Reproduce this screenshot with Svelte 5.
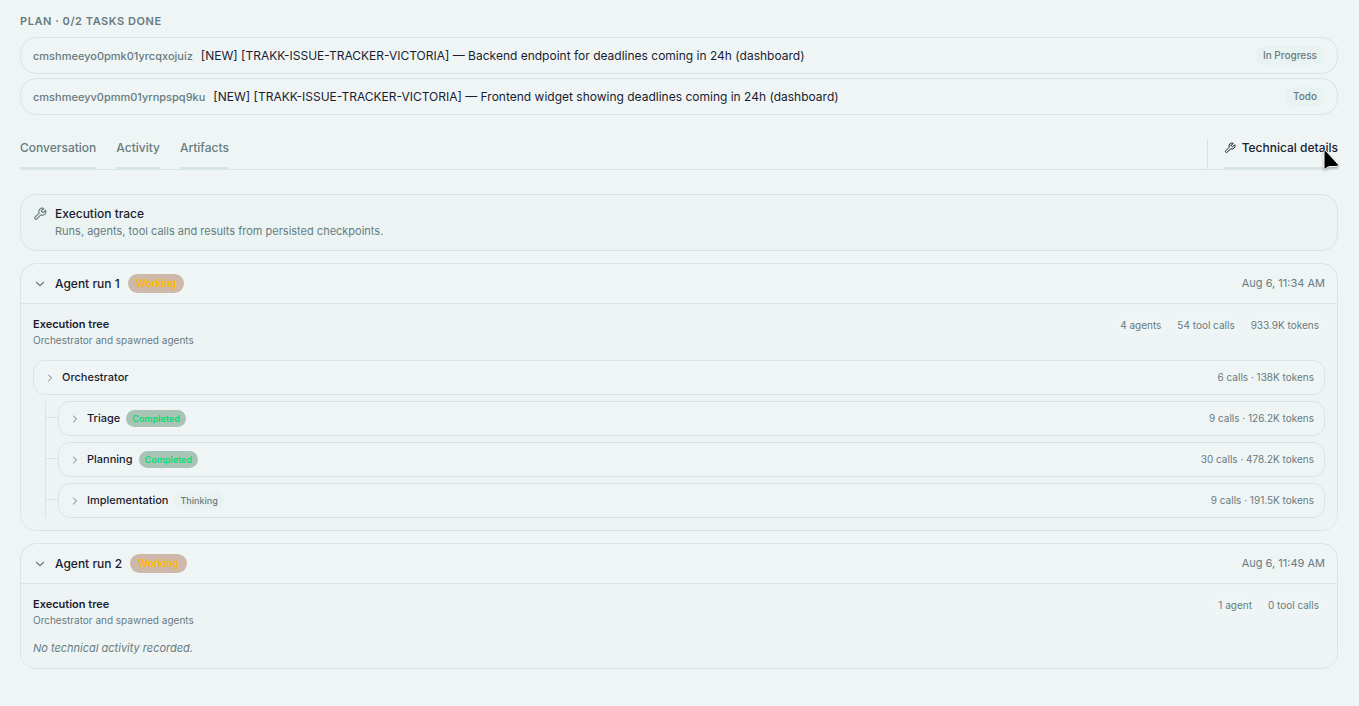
<script lang="ts">
	const tasks = [
		{
			id: "cmshmeeyo0pmk01yrcqxojuiz",
			title: "[NEW] [TRAKK-ISSUE-TRACKER-VICTORIA] — Backend endpoint for deadlines coming in 24h (dashboard)",
			status: "In Progress"
		},
		{
			id: "cmshmeeyv0pmm01yrnpspq9ku",
			title: "[NEW] [TRAKK-ISSUE-TRACKER-VICTORIA] — Frontend widget showing deadlines coming in 24h (dashboard)",
			status: "Todo"
		}
	];

	const tabs = ["Conversation", "Activity", "Artifacts"];
	let activeTab = $state("Technical details");

	let runs = $state([
		{
			name: "Agent run 1",
			status: "Working",
			time: "Aug 6, 11:34 AM",
			open: true,
			stats: ["4 agents", "54 tool calls", "933.9K tokens"],
			root: { name: "Orchestrator", usage: "6 calls · 138K tokens" },
			children: [
				{ name: "Triage", status: "Completed", usage: "9 calls · 126.2K tokens" },
				{ name: "Planning", status: "Completed", usage: "30 calls · 478.2K tokens" },
				{ name: "Implementation", status: "Thinking", usage: "9 calls · 191.5K tokens" }
			]
		},
		{
			name: "Agent run 2",
			status: "Working",
			time: "Aug 6, 11:49 AM",
			open: true,
			stats: ["1 agent", "0 tool calls"],
			root: null,
			children: []
		}
	]);
</script>

{#snippet wrench(size)}
	<svg class="icon" width={size} height={size} viewBox="0 0 24 24" aria-hidden="true">
		<path d="M14.7 6.3a1 1 0 0 0 0 1.4l1.6 1.6a1 1 0 0 0 1.4 0l3.77-3.77a6 6 0 0 1-7.94 7.94l-6.91 6.91a2.12 2.12 0 0 1-3-3l6.91-6.91a6 6 0 0 1 7.94-7.94l-3.76 3.76z" />
	</svg>
{/snippet}

{#snippet chevron(size, open)}
	<svg class="icon chevron" width={size} height={size} viewBox="0 0 24 24" aria-hidden="true">
		<path d={open ? "m6 9 6 6 6-6" : "m9 18 6-6-6-6"} />
	</svg>
{/snippet}

{#snippet node(item)}
	<button class="node">
		{@render chevron(12, false)}
		<span class="node-name">{item.name}</span>
		{#if item.status}
			<span class="badge small {item.status.toLowerCase()}">{item.status}</span>
		{/if}
		<span class="usage">{item.usage}</span>
	</button>
{/snippet}

<main>
	<section>
		<h2 class="plan-title">Plan · 0/2 tasks done</h2>
		<ul class="tasks">
			{#each tasks as task}
				<li class="task">
					<span class="task-id">{task.id}</span>
					<span class="task-title">{task.title}</span>
					<span class="badge">{task.status}</span>
				</li>
			{/each}
		</ul>
	</section>

	<nav class="tabs">
		{#each tabs as tab}
			<button class="tab" class:active={activeTab === tab} onclick={() => (activeTab = tab)}>{tab}</button>
		{/each}
		<div class="technical">
			<button
				class="tab"
				class:active={activeTab === "Technical details"}
				onclick={() => (activeTab = "Technical details")}
			>
				{@render wrench(12)}
				Technical details
			</button>
			<svg class="cursor" width="22" height="28" viewBox="0 0 22 28" aria-hidden="true">
				<path d="M4 4.5v18.2l4.500-3 8.600-.3c1.400-.2 1.700-1.500.8-2.400L6 4C5 3.200 4 3.500 4 4.500z" />
			</svg>
		</div>
	</nav>

	<div class="panels">
		<section class="card trace">
			{@render wrench(14)}
			<div>
				<h3 class="trace-title">Execution trace</h3>
				<p class="trace-text">Runs, agents, tool calls and results from persisted checkpoints.</p>
			</div>
		</section>

		{#each runs as run}
			<section class="card">
				<button class="run-head" aria-expanded={run.open} onclick={() => (run.open = !run.open)}>
					{@render chevron(14, run.open)}
					<span class="run-name">{run.name}</span>
					<span class="badge working">{run.status}</span>
					<span class="time">{run.time}</span>
				</button>
				{#if run.open}
					<div class="run-body">
						<div class="tree-head">
							<div>
								<h4 class="tree-title">Execution tree</h4>
								<p class="tree-text">Orchestrator and spawned agents</p>
							</div>
							<div class="stats">
								{#each run.stats as stat}
									<span class="stat">{stat}</span>
								{/each}
							</div>
						</div>
						{#if run.root}
							<div class="tree">
								{@render node(run.root)}
								<ul class="branch">
									{#each run.children as child}
										<li>{@render node(child)}</li>
									{/each}
								</ul>
							</div>
						{:else}
							<p class="empty">No technical activity recorded.</p>
						{/if}
					</div>
				{/if}
			</section>
		{/each}
	</div>
</main>

<style>
	:global(body) {
		background: #eff5f5;
	}

	main {
		--text: #1a1c30;
		--muted: #677b80;
		--border: #d7e6e3;
		padding: 12px 21px 36px 20px;
		font-family: Inter, "Liberation Sans", sans-serif;
		font-size: 12px;
		line-height: 18px;
		color: var(--text);
	}

	h2, h3, h4, p, ul {
		margin: 0;
		padding: 0;
		list-style: none;
	}

	button {
		margin: 0;
		padding: 0;
		border: 0;
		background: none;
		font: inherit;
		color: inherit;
		text-align: left;
		cursor: pointer;
	}

	.icon {
		flex: none;
		fill: none;
		stroke: currentColor;
		stroke-width: 2;
		stroke-linecap: round;
		stroke-linejoin: round;
	}

	.plan-title {
		margin-bottom: 7px;
		font-size: 11px;
		font-weight: 600;
		letter-spacing: 0.05em;
		text-transform: uppercase;
		color: var(--muted);
	}

	.tasks {
		display: grid;
		gap: 4px;
	}

	.task {
		display: flex;
		align-items: center;
		gap: 8px;
		padding: 8px 12px;
		border: 1px solid var(--border);
		border-radius: 16px;
	}

	.task-id {
		font-size: 11px;
		font-weight: 500;
		color: var(--muted);
	}

	.task-title {
		flex: 1;
		min-width: 0;
	}

	.badge {
		padding: 0 8px;
		border-radius: 10px;
		background: #e8f2f0;
		font-size: 10px;
		font-weight: 500;
		line-height: 19px;
		color: var(--muted);
	}

	.badge.small {
		padding: 0 6px;
		font-size: 9px;
		line-height: 17px;
	}

	.badge.working {
		background: #cdb8aa;
		font-weight: 600;
		color: #ffb900;
	}

	.badge.completed {
		background: #a9c3b7;
		font-weight: 600;
		color: #05df72;
	}

	.tabs {
		display: flex;
		gap: 20px;
		margin-top: 24px;
		border-bottom: 1px solid var(--border);
	}

	.tab {
		display: flex;
		align-items: center;
		gap: 6px;
		margin-bottom: -1px;
		padding-bottom: 10px;
		border-bottom: 3px solid var(--border);
		font-weight: 500;
		color: var(--muted);
	}

	.tab.active {
		color: var(--text);
	}

	.technical {
		position: relative;
		display: flex;
		margin-left: auto;
		padding-left: 16px;
		border-left: 1px solid var(--border);
	}

	.cursor {
		position: absolute;
		top: 8px;
		right: -4px;
		fill: #000;
		stroke: #fff;
		stroke-width: 1;
		filter: drop-shadow(0 1px 1px rgba(0, 0, 0, 0.3));
		pointer-events: none;
	}

	.panels {
		display: grid;
		gap: 12px;
		margin-top: 24px;
	}

	.card {
		border: 1px solid var(--border);
		border-radius: 16px;
		overflow: hidden;
	}

	.trace {
		display: flex;
		gap: 8px;
		padding: 10px 12px;
		background: #ebf4f3;
	}

	.trace .icon {
		margin-top: 2px;
		color: var(--muted);
	}

	.trace-title {
		font-size: 12px;
		font-weight: 500;
	}

	.trace-text {
		font-size: 11px;
		line-height: 17px;
		color: var(--muted);
	}

	.run-head {
		display: flex;
		align-items: center;
		gap: 8px;
		width: 100%;
		padding: 10px 12px;
		line-height: 19px;
	}

	.chevron {
		color: var(--muted);
	}

	.run-name {
		font-weight: 500;
	}

	.time {
		margin-left: auto;
		font-size: 11px;
		color: var(--muted);
	}

	.run-body {
		display: grid;
		gap: 12px;
		padding: 12px;
		border-top: 1px solid var(--border);
		background: #eef4f4;
	}

	.tree-head {
		display: flex;
		justify-content: space-between;
		align-items: flex-start;
	}

	.tree-title {
		font-size: 11px;
		font-weight: 600;
		line-height: 16px;
	}

	.tree-text {
		font-size: 10px;
		line-height: 16px;
		color: var(--muted);
	}

	.stats {
		display: flex;
		gap: 4px;
	}

	.stat {
		padding: 0 6px;
		border-radius: 9px;
		background: #eff5f5;
		font-size: 10px;
		color: var(--muted);
	}

	.tree {
		display: grid;
		gap: 6px;
	}

	.node {
		display: flex;
		align-items: center;
		gap: 6px;
		width: 100%;
		padding: 8px 10px;
		border: 1px solid var(--border);
		border-radius: 12px;
		background: #eff5f5;
		line-height: 17px;
	}

	.node-name {
		font-size: 11px;
		font-weight: 500;
	}

	.usage {
		margin-left: auto;
		font-size: 10px;
		color: var(--muted);
	}

	.branch {
		display: grid;
		gap: 6px;
		margin-left: 12px;
		padding-left: 12px;
		border-left: 1px solid var(--border);
	}

	.branch li {
		position: relative;
	}

	.branch li::before {
		content: "";
		position: absolute;
		top: 16px;
		left: -12px;
		width: 12px;
		height: 1px;
		background: var(--border);
	}

	.empty {
		font-size: 11px;
		font-style: italic;
		line-height: 16px;
		color: var(--muted);
	}
</style>
